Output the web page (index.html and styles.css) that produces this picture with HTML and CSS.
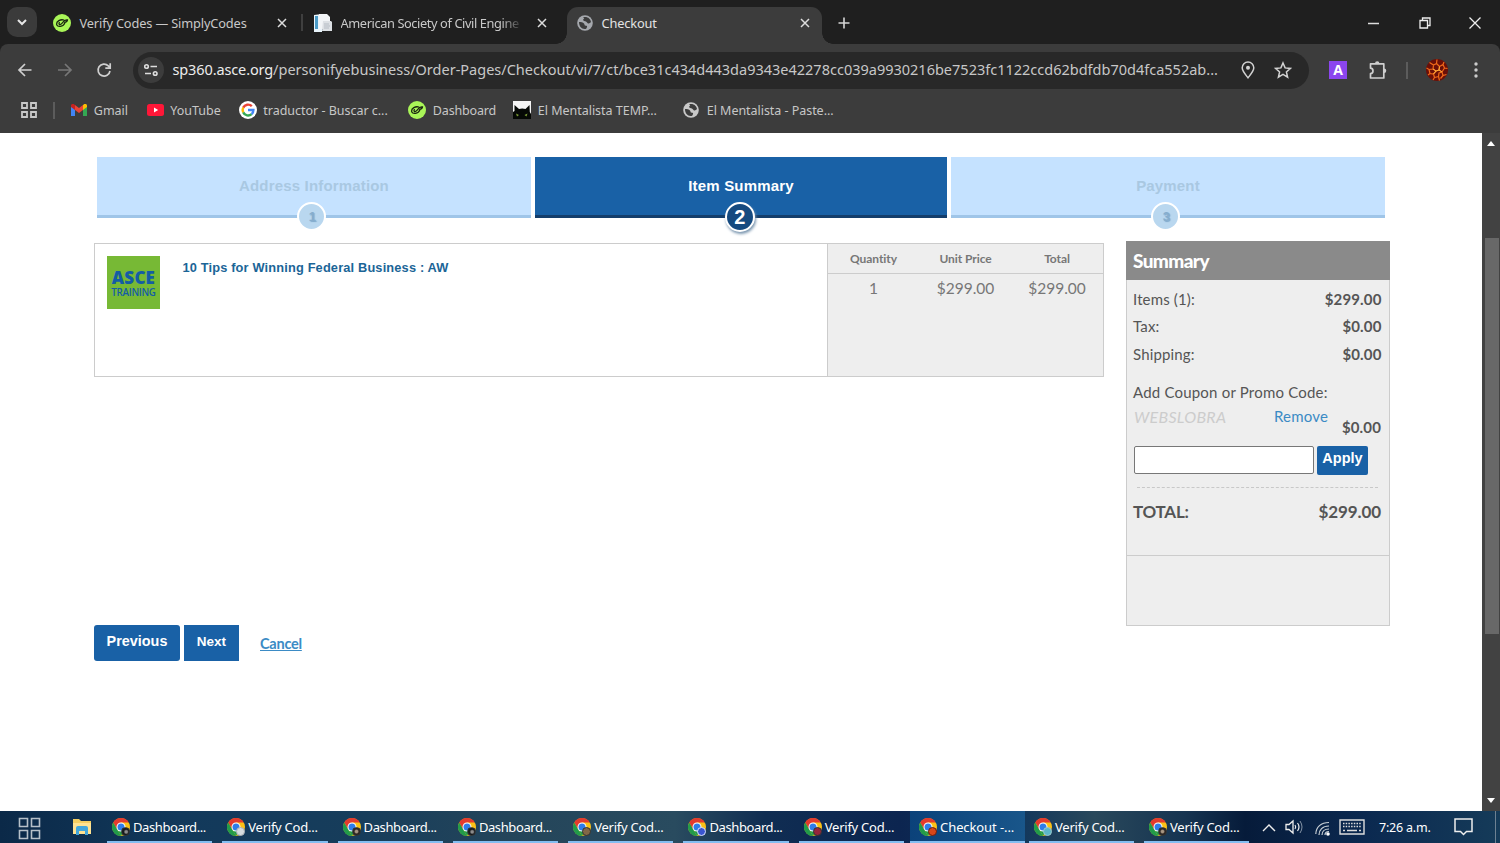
FILE: index.html
```html
<!DOCTYPE html>
<html lang="en">
<head>
<meta charset="utf-8">
<title>Checkout</title>
<link rel="stylesheet" href="styles.css">
</head>
<body>
<svg class="defs" aria-hidden="true">
  <symbol id="x" viewBox="0 0 10 10"><path d="M1 1l8 8M9 1l-8 8" fill="none" stroke="currentColor" stroke-width="1.5"/></symbol>
  <symbol id="globe" viewBox="0 0 16 16"><circle cx="8" cy="8" r="7.8" fill="currentColor"/><path d="M2 7c2 0 4 0 5 1.500 1 1.300.2 2.300 2 2.300s1 1.700.2 3C5 14.800 2 11.500 2 7zM6.200 2.300C10 1 13.500 3.500 14 7c-.8 1-2.200 2-3.300 1.200C9.500 7.300 9.700 6.600 8 6.300 6 6 5.500 4 7.200 3.800z" fill="#3c3c3c"/></symbol>
  <symbol id="simply" viewBox="0 0 18 18"><circle cx="9" cy="9" r="9" fill="#a9f558"/><path d="M10.800 6C7.500 5 3.400 7.300 3.600 10.200c.3 3.300 6.800 2.800 8.300-1.300M6.300 8.600c-.8 1.500.2 2.500 1.500 1.700 1.500-.9 2.600-3 4-3.800 1-.6 1.900-.8 2.700-.6-.2 1.400-1.400 2.300-2.900 2.400" fill="none" stroke="#18220f" stroke-width="1.300" stroke-linecap="round"/></symbol>
  <symbol id="chrome" viewBox="0 0 18 18"><circle cx="9" cy="9" r="9" fill="#fbc116"/><path d="M1.200 4.500A9 9 0 0 1 16.800 4.500H9L5.100 11.200z" fill="#e33b2e"/><path d="M1.200 4.500l3.900 6.800L9 18A9 9 0 0 1 1.200 4.500z" fill="#229b4a"/><path d="M5.100 11.300h7.800L9 18z" fill="#229b4a"/><circle cx="9" cy="9" r="4.500" fill="#fff"/><circle cx="9" cy="9" r="3.500" fill="#2f7de9"/></symbol>
</svg>
<header class="browser">
  <div class="tabs">
    <button class="tab-search"><svg width="10" height="7" viewBox="0 0 10 7"><path d="M1 1l4 4 4-4" fill="none" stroke="#e6e6e6" stroke-width="2"/></svg></button>
    <div class="tab tab-one"><svg class="fav"><use href="#simply"/></svg><span>Verify Codes — SimplyCodes</span><svg class="close"><use href="#x"/></svg></div>
    <div class="tab tab-two"><svg class="fav" viewBox="0 0 18 18"><path d="M0 1l8-1v18H0z" fill="#e9f4fb"/><path d="M1 2h3v13H1z" fill="#4b9bc7"/><path d="M5 0h8l3 3v12H5z" fill="#f2f5f7"/><path d="M9 7h8l1 1v9H8z" fill="#dce0e4"/><path d="M10 10h5M10 12h6M10 14h5" stroke="#b5bcc4"/></svg><span>American Society of Civil Engine</span><svg class="close"><use href="#x"/></svg></div>
    <div class="tab tab-active"><svg class="fav globe"><use href="#globe"/></svg><span>Checkout</span><svg class="close"><use href="#x"/></svg></div>
    <svg class="plus" viewBox="0 0 12 12"><path d="M6 .5v11M.5 6h11" stroke="#d5d5d5" stroke-width="1.600"/></svg>
    <div class="window-controls">
      <svg width="12" height="12"><path d="M0 6.500h11" stroke="#ddd" stroke-width="1.500"/></svg>
      <svg width="12" height="12"><path d="M1 3.500h7.500V11H1zM3.500 3V1H11v7.500H9" fill="none" stroke="#eee" stroke-width="1.300"/></svg>
      <svg width="12" height="12"><path d="M.5.500l11 11M11.500.500l-11 11" stroke="#eee" stroke-width="1.300"/></svg>
    </div>
  </div>
  <div class="toolbar">
    <svg class="nav" viewBox="0 0 16 16"><path d="M14.500 8H2.500M8 2L2 8l6 6" fill="none" stroke="#cfcfcf" stroke-width="1.700"/></svg>
    <svg class="nav" viewBox="0 0 16 16"><path d="M1 8h12.500M8 2l6 6-6 6" fill="none" stroke="#777" stroke-width="1.700"/></svg>
    <svg class="nav" viewBox="0 0 16 16"><path d="M14 9A6 6 0 1 1 12.300 3.800L14 5.500M14.200 1.200v5H9.300" fill="none" stroke="#cfcfcf" stroke-width="1.700"/></svg>
    <div class="address">
      <span class="site-info"><svg width="14" height="14" viewBox="0 0 14 14"><g fill="none" stroke="#dedede" stroke-width="1.600"><circle cx="2.500" cy="3.500" r="1.800"/><path d="M6.500 3.500H13M1 10.500h6"/><circle cx="11.200" cy="10.500" r="1.800"/></g></svg></span>
      <span class="url"><b>sp360.asce.org</b>/personifyebusiness/Order-Pages/Checkout/vi/7/ct/bce31c434d443da9343e42278cc039a9930216be7523fc1122ccd62bdfdb70d4fca552ab...</span>
      <svg class="pin" width="14" height="18" viewBox="0 0 14 18"><path d="M7 16.800C4 13 1.200 10 1.200 6.800a5.800 5.800 0 0 1 11.600 0C12.800 10 10 13 7 16.800z" fill="none" stroke="#d2d2d2" stroke-width="1.500"/><circle cx="7" cy="6.800" r="2" fill="#d2d2d2"/></svg>
      <svg class="star" width="18" height="18" viewBox="0 0 18 18"><path d="M9 2l2.100 4.900 5.300.5-4 3.500 1.200 5.200L9 13.400l-4.600 2.700 1.200-5.200-4-3.500 5.300-.5z" fill="none" stroke="#d2d2d2" stroke-width="1.500"/></svg>
    </div>
    <span class="extension">A</span>
    <svg class="puzzle" width="18" height="19" viewBox="0 0 18 19"><path d="M1.500 2.800h13.300v14.200H1.500v-4.300c3.300-.2 3.300-5.300 0-5.500z" fill="none" stroke="#cfcfcf" stroke-width="1.700" stroke-linejoin="round"/><path d="M6 2.500a2.200 2.200 0 0 1 4.400 0zM15 7.500a2.200 2.200 0 0 1 0 4.600z" fill="#cfcfcf"/></svg>
    <span class="bar-sep"></span>
    <svg class="avatar" width="22" height="22" viewBox="0 0 22 22"><circle cx="11" cy="11" r="11" fill="#6b0f08"/><g fill="none" stroke="#f0691a" stroke-width="1.200"><path d="M3.500 3.500l4 2.500 3-1.500L11 .5M10.500 4.500l3 3 3.500-2 1-2.500M17 5.500l1.500 3.500 3 .5M13.500 7.500L13 11l3 2 2.500-4M16 13l1 3.500 3.500-1M17 16.500l-2.500 3M7.500 6L7 10l3 2 3-1M7 10l-4 .5L.5 9M3 10.500l1 4 3.500.5 2.500-3M4 14.500l-2 1.500M7.500 15l1 3.500L7 21M8.500 18.500l4-1L13 14l3-1M12.500 17.500l1 4"/></g><path d="M7 10l3 2 3-1 .5-3.500M10 12l-2.500 3M13 11l3 2" fill="none" stroke="#ffb640" stroke-width=".9"/></svg>
    <svg class="dots" width="4" height="18"><circle cx="2" cy="3" r="1.700" fill="#ccc"/><circle cx="2" cy="9" r="1.700" fill="#ccc"/><circle cx="2" cy="15" r="1.700" fill="#ccc"/></svg>
  </div>
  <nav class="bookmarks">
    <svg class="apps" width="16" height="16"><path d="M1 1h5v5H1zM10 1h5v5h-5zM1 10h5v5H1zM10 10h5v5h-5z" fill="none" stroke="#c9c9c9" stroke-width="1.800"/></svg>
    <span class="bar-sep"></span>
    <a><svg width="16" height="12" viewBox="0 0 16 12"><path d="M0 1v11h4V4.500z" fill="#4285f4"/><path d="M12 4.500V12h4V1z" fill="#34a853"/><path d="M12 1v5l4-3V1.500C16 0 14-.5 13 .2z" fill="#fbbc04"/><path d="M4 6V1l4 3 4-3v5L8 9z" fill="#ea4335"/><path d="M0 1.500V3l4 3V1L3 .2C2-.5 0 0 0 1.500z" fill="#c5221f"/></svg><span>Gmail</span></a>
    <a><svg width="17" height="12" viewBox="0 0 17 12"><rect width="17" height="12" rx="2.500" fill="#ff1738"/><path d="M7 3.500l4.200 2.500L7 8.500z" fill="#fff"/></svg><span>YouTube</span></a>
    <a><svg width="18" height="18" viewBox="0 0 18 18"><circle cx="9" cy="9" r="9" fill="#fff"/><g fill="none" stroke-width="2.400"><path d="M4.200 6.600A5.400 5.400 0 0 1 12.800 5.200" stroke="#ea4335"/><path d="M4.200 6.600a5.400 5.400 0 0 0 0 4.800" stroke="#fbbc05"/><path d="M4.200 11.400a5.400 5.400 0 0 0 8.400 1.700" stroke="#34a853"/><path d="M9 9h5.400c0 2-.7 3.200-1.800 4.100" stroke="#4285f4"/></g></svg><span>traductor - Buscar c...</span></a>
    <a><svg width="18" height="18"><use href="#simply"/></svg><span class="dash">Dashboard</span></a>
    <a><svg width="18" height="18" viewBox="0 0 18 18"><path fill="#f5f5f5" d="M0 0h18v18H0z"/><path d="M0 18v-7l1.500-1L1.500 4l4.500 4c2-.8 4.500-.8 6.500 0L16.500 4l.3 7 1.200 2v5z" fill="#050805"/><path d="M3 12.500l3 1.500-2 1.500zM14.500 12.500L11.500 14l2 1.500z" fill="#7c9c35"/></svg><span>El Mentalista TEMP...</span></a>
    <a><svg width="16" height="16" class="light"><use href="#globe"/></svg><span class="paste">El Mentalista - Paste...</span></a>
  </nav>
</header>
<div class="viewport">
  <main class="page">
    <section class="steps">
      <div class="step"><span>Address Information</span><i>1</i></div>
      <div class="step current"><span>Item Summary</span><i>2</i></div>
      <div class="step"><span>Payment</span><i>3</i></div>
    </section>
    <div class="columns">
      <div class="left">
        <section class="item">
          <div class="product">
            <div class="logo"><b>ASCE</b><span>TRAINING</span></div>
            <a class="title">10 Tips for Winning Federal Business : AW</a>
          </div>
          <div class="prices">
            <div class="price-row head"><span>Quantity</span><span>Unit Price</span><span>Total</span></div>
            <div class="price-row"><span>1</span><span>$299.00</span><span>$299.00</span></div>
          </div>
        </section>
        <div class="actions"><button class="btn prev">Previous</button><button class="btn next">Next</button><a class="cancel">Cancel</a></div>
      </div>
      <aside class="summary">
        <h2><span>Summary</span></h2>
        <div class="line"><span>Items (1):</span><b>$299.00</b></div>
        <div class="line"><span>Tax:</span><b>$0.00</b></div>
        <div class="line"><span>Shipping:</span><b>$0.00</b></div>
        <div class="coupon-label"><span>Add Coupon or Promo Code:</span></div>
        <div class="coupon"><em>WEBSLOBRA</em><a>Remove</a><b>$0.00</b></div>
        <div class="promo"><input type="text" aria-label="Promo code"><button>Apply</button></div>
        <div class="total"><b>TOTAL:</b><b>$299.00</b></div>
        <div class="foot"></div>
      </aside>
    </div>
  </main>
  <div class="scrollbar"><svg width="8" height="5"><path d="M0 5l4-5 4 5z" fill="#fff"/></svg><span class="thumb"></span><svg width="8" height="5"><path d="M0 0h8L4 5z" fill="#fff"/></svg></div>
</div>
<footer class="taskbar">
  <svg class="start" width="23" height="23"><path d="M1.500 1.500h8v8h-8zM13.500 1.500h8v8h-8zM1.500 13.500h8v8h-8zM13.500 13.500h8v8h-8z" fill="none" stroke="#b6c0c9" stroke-width="1.600"/></svg>
  <svg class="folder" width="18" height="16" viewBox="0 0 18 16"><path d="M0 0h6l2 2h10v13H0z" fill="#f5cf62"/><path d="M0 4h18v11H0z" fill="#ffe392"/><path d="M3 16V9q0-2 2-2h8q2 0 2 2v7h-3v-4H6v4z" fill="#42a7dc"/></svg>
  <div class="tasks">
    <div class="task"><span class="ci"><svg><use href="#chrome"/></svg><i class="c1"></i></span><span class="d">Dashboard...</span></div>
    <div class="task"><span class="ci"><svg><use href="#chrome"/></svg><i class="c2"></i></span><span>Verify Cod...</span></div>
    <div class="task"><span class="ci"><svg><use href="#chrome"/></svg><i class="c3"></i></span><span class="d">Dashboard...</span></div>
    <div class="task"><span class="ci"><svg><use href="#chrome"/></svg><i class="c1"></i></span><span class="d">Dashboard...</span></div>
    <div class="task"><span class="ci"><svg><use href="#chrome"/></svg><i class="c4"></i></span><span>Verify Cod...</span></div>
    <div class="task"><span class="ci"><svg><use href="#chrome"/></svg><i class="c5"></i></span><span class="d">Dashboard...</span></div>
    <div class="task"><span class="ci"><svg><use href="#chrome"/></svg><i class="c6"></i></span><span>Verify Cod...</span></div>
    <div class="task active"><span class="ci"><svg><use href="#chrome"/></svg><i class="c7"></i></span><span class="k">Checkout -...</span></div>
    <div class="task"><span class="ci"><svg><use href="#chrome"/></svg><i class="c8"></i></span><span>Verify Cod...</span></div>
    <div class="task"><span class="ci"><svg><use href="#chrome"/></svg><i class="c3"></i></span><span>Verify Cod...</span></div>
  </div>
  <div class="tray">
    <svg width="14" height="9"><path d="M1 8l6-6 6 6" fill="none" stroke="#eee" stroke-width="1.400"/></svg>
    <svg width="19" height="16"><path d="M1 5.500h3L8 2v12l-4-3.500H1z" fill="none" stroke="#eee" stroke-width="1.300"/><path d="M10 6q1.500 2 0 4M12.500 4q3 4 0 8" fill="none" stroke="#eee" stroke-width="1.200"/><path d="M15 2q4 6 0 12" fill="none" stroke="#8494a5"/></svg>
    <svg width="15" height="15"><g fill="none" stroke="#c8d0d6" stroke-width="1.200"><path d="M.8 13C1 6 6 1.500 14 1.500M4 14c0-5 3.500-9 10-9M7 14c0-3.500 2.500-6 7-6M10 14c0-2 1.500-3.500 4-3.500"/></g><circle cx="13" cy="13" r="1.800" fill="#fff"/></svg>
    <svg width="26" height="16"><path d="M1 1h24v14H1z" fill="none" stroke="#ddd" stroke-width="1.400"/><path d="M4 4.500h18M4 7.500h18" stroke="#ddd" stroke-width="1.500" stroke-dasharray="1.500 1.200"/><path d="M4 11.500h2M8 11.500h10M20 11.500h2" stroke="#ddd" stroke-width="1.400"/></svg>
    <span class="clock">7:26 a.m.</span>
    <svg width="19" height="18"><path d="M1 1h17v12.500h-5.500l-3 3-3-3H1z" fill="none" stroke="#eee" stroke-width="1.500"/></svg>
  </div>
  <span class="peek"></span>
</footer>
</body>
</html>
```
FILE: styles.css
```css
* { box-sizing: border-box; }
html, body { margin: 0; height: 843px; overflow: hidden; }
body { display: flex; flex-direction: column; background: #fff; font-family: "Noto Sans", sans-serif; }
svg { display: block; flex: none; }
.defs { width: 0; height: 0; position: absolute; }
button, input { font: inherit; padding: 0; margin: 0; border: 0; }
span, a, b, em { white-space: nowrap; }

/* Browser chrome */
.browser { height: 133px; flex: none; background: #1f1f1f; }
.tabs { height: 44px; display: flex; align-items: flex-start; padding: 7px 19px 0 7px; }
.tab-search { width: 30px; height: 30px; border-radius: 10px; background: #3b3b3b; display: grid; place-items: center; margin-right: 16px; }
.tab { display: flex; align-items: center; height: 32px; font-size: 12.8px; letter-spacing: -.15px; color: #c8c8c8; }
.tab .fav { width: 18px; height: 18px; margin-right: 8.500px; }
.tab .close { width: 10px; height: 10px; margin-left: auto; color: #ddd; }
.tab-one { width: 250px; padding-right: 16px; position: relative; }
.tab-one::after { content: ""; position: absolute; right: 0; top: 7px; width: 2px; height: 17px; background: #3f3f3f; }
.tab-two { width: 245px; padding: 0 0 0 11px; margin-right: 19px; }
.tab-two .close { margin-right: 1px; }
.tab-two span { letter-spacing: -.4px; -webkit-mask-image: linear-gradient(90deg, #000 90%, rgba(0,0,0,.2)); mask-image: linear-gradient(90deg, #000 90%, rgba(0,0,0,.2)); }
.tab-active { width: 255px; height: 37px; padding: 0 12px 5px 10px; background: #3c3c3c; border-radius: 11px 11px 0 0; color: #e3e3e3; position: relative; }
.tab-active::before, .tab-active::after { content: ""; position: absolute; bottom: 0; width: 11px; height: 11px; }
.tab-active::before { left: -11px; background: radial-gradient(circle at 0 0, transparent 10.5px, #3c3c3c 11px); }
.tab-active::after { right: -11px; background: radial-gradient(circle at 100% 0, transparent 10.5px, #3c3c3c 11px); }
.tab .globe { width: 16px; height: 16px; color: #a5a8ad; }
.plus { width: 12px; height: 12px; margin: 10px 0 0 16px; }
.window-controls { margin: 10px 0 0 auto; display: flex; gap: 38.500px; }
.toolbar { height: 52px; background: #3c3c3c; border-radius: 8px 8px 0 0; display: flex; align-items: center; padding: 0 22px 0 17px; }
.nav { width: 16px; height: 16px; margin-right: 23.500px; }
.address { width: 1176px; height: 37px; margin-left: -2.500px; border-radius: 19px; background: #282828; display: flex; align-items: center; padding-left: 5px; }
.site-info { width: 26px; height: 26px; border-radius: 13px; background: #3c3c3c; display: grid; place-items: center; }
.url { margin: -2px 0 0 8.500px; width: 1068.500px; font-size: 14.500px; color: #c7c7c7; }
.url b { font-weight: 400; color: #ececec; letter-spacing: -.12px; }
.star { margin-left: 19px; }
.extension { width: 18px; height: 18px; margin-left: 20px; background: #8b45ee; color: #fff; font: bold 14px/18px "Open Sans", sans-serif; text-align: center; }
.puzzle { margin-left: 22px; }
.bar-sep { width: 2px; height: 17px; background: #5c5c5c; }
.toolbar .bar-sep { margin: 0 18px 0 19px; }
.dots { margin-left: 26px; }
.bookmarks { height: 37px; background: #3c3c3c; display: grid; grid-template-columns: 32px 18px 75.500px 92px 169.500px 105px 170px 170px; align-items: center; padding: 0 0 9px 21px; font-size: 12.500px; letter-spacing: -.02px; color: #c7c7c7; }
.bookmarks a { display: flex; align-items: center; gap: 6.800px; }
.bookmarks .dash { letter-spacing: -.15px; }
.bookmarks .paste { letter-spacing: -.04px; margin-left: 1px; }
.light { color: #c8c8c8; }

/* Checkout page */
.viewport { flex: 1; min-height: 0; display: flex; }
.page { flex: 1; font-family: Lato, sans-serif; font-size: 15px; color: #555; }
.steps { display: grid; grid-template-columns: 434px 412px 434px; gap: 4px; margin: 24px 0 0 97px; height: 61px; }
.step { background: #c5e2ff; border-bottom: 3px solid #9fc5e8; color: #a9c8e2; font: bold 15px/58px "Liberation Sans", sans-serif; text-align: center; position: relative; letter-spacing: .17px; }
.step i { position: absolute; left: 200px; top: 45px; width: 29px; height: 29px; border: 2px solid #fff; border-radius: 50%; background: #b9d7ef; color: #86adcd; font: bold 13px/26px "Liberation Sans", sans-serif; padding-left: 2px; text-shadow: 1px 1px 1px #7fa9cb; }
.current { background: #1961a6; border-color: #143e6b; color: #fff; }
.current i { left: 190px; width: 30px; height: 30px; background: #154a80; color: #fff; font-size: 20px; line-height: 26px; padding: 0; text-shadow: none; box-shadow: 1px 2px 3px #7894ae; }
.columns { display: flex; align-items: flex-start; padding: 23px 0 0 94px; }
.left { width: 1010px; padding-top: 2px; margin-right: 22px; }
.item { height: 134px; border: 1px solid #ccc; display: flex; }
.product { width: 732px; display: flex; padding: 12px; }
.logo { width: 53px; height: 53px; background: #77b935; color: #145da5; display: flex; flex-direction: column; align-items: center; padding-top: 12px; font-family: "Open Sans", sans-serif; }
.logo b { font-size: 17px; line-height: 19px; font-weight: 800; letter-spacing: .2px; }
.logo span { font-size: 9.800px; line-height: 12px; font-weight: 600; letter-spacing: -.3px; }
.title { margin-left: 22.500px; font: bold 12.800px/23px "Liberation Sans", sans-serif; color: #1b6597; letter-spacing: .16px; }
.prices { flex: 1; background: #eee; border-left: 1px solid #ccc; color: #777; }
.price-row { display: grid; grid-template-columns: 91px 93px 90px; text-align: center; line-height: 28px; font-size: 15.500px; }
.head { font-size: 12px; line-height: 29px; font-weight: 700; border-bottom: 1px solid #ccc; height: 30px; letter-spacing: -.07px; }
.actions { display: flex; margin-top: 248px; }
.btn { height: 36px; background: #1961a6; color: #fff; font: bold 14.400px "Liberation Sans", sans-serif; padding-bottom: 4px; }
.prev { width: 86px; border-radius: 3px; }
.next { width: 55px; margin-left: 4px; font-size: 13.500px; }
.cancel { margin: 9px 0 0 21px; font-weight: 700; font-size: 14.500px; color: #3b8bc5; text-decoration: underline; letter-spacing: -.25px; line-height: 19px; }
.summary { width: 264px; height: 385px; background: #eee; border: 1px solid #ccc; border-top: 0; }
.summary h2 { margin: 0 -1px 6px; height: 39px; line-height: 40px; background: #8a8a8a; color: #fff; padding-left: 7px; font-size: 19px; font-weight: 900; letter-spacing: -.6px; }
.line { display: flex; justify-content: space-between; padding: 0 7.500px 0 6px; height: 27.400px; line-height: 27px; letter-spacing: .15px; }
.coupon-label { padding: 15px 0 0 6px; line-height: 18px; letter-spacing: .2px; }
.coupon { display: flex; padding: 6px 8px 0 7px; line-height: 19px; height: 44.500px; }
.coupon em { color: #ccc; width: 140px; font-size: 16px; letter-spacing: .3px; }
.coupon a { color: #3b8bc5; letter-spacing: .2px; }
.coupon b { margin: 11px 0 0 auto; letter-spacing: .15px; }
.promo { display: flex; padding-left: 7px; gap: 3px; }
.promo input { width: 180px; height: 28px; background: #fff; border: 1px solid #777; border-radius: 2px; }
.promo button { width: 51px; height: 29px; border-radius: 2px; background: #1961a6; color: #fff; font: bold 14.500px "Liberation Sans", sans-serif; padding-bottom: 4px; }
.total { margin: 12px 11px 0 10px; border-top: 1px dashed #c8c8c8; height: 68px; padding-top: 14px; display: flex; justify-content: space-between; font-size: 17px; line-height: 20px; letter-spacing: -.1px; }
.total b:first-child { margin-left: -4px; letter-spacing: -.25px; }
.total b:last-child { margin-right: -3px; }
.foot { border-top: 1px solid #ccc; }
.scrollbar { width: 18px; background: #424242; display: flex; flex-direction: column; align-items: center; padding: 8px 0; }
.thumb { width: 14px; height: 396px; background: #686868; margin: 92px 0 auto 1px; }

/* Desktop taskbar */
.taskbar { height: 32px; flex: none; display: flex; align-items: center; color: #fff; position: relative; background: linear-gradient(90deg, #0b2948 0, #12395b 12%, #173d5b 24%, #24455a 34%, #294b5f 45%, #102d52 51%, #0c2550 60%, #12375c 68%, #29485b 73%, #163451 79%, #061b3a 83%, #0b2950 91%, #153b59 100%); }
.start { margin: 3px 0 0 17.500px; }
.folder { margin: 0 0 0 32px; }
.tasks { display: grid; grid-template-columns: repeat(7, 105.300px) 114px 105px 105px; gap: 10px; margin-left: 16.500px; align-self: stretch; }
.task { display: flex; align-items: center; border-bottom: 2px solid #83bdf0; padding: 2px 0 0 5px; font-size: 13px; letter-spacing: -.25px; }
.task .d { letter-spacing: -.4px; }
.task.active { margin-left: -4px; width: 115px; padding-left: 9px; background: linear-gradient(90deg, #0b427a, #19568a); }
.task .k { letter-spacing: -.1px; }
.task:nth-child(n+9) { margin-left: -9px; width: 105px; }
.ci { position: relative; width: 18px; height: 18px; margin-right: 3px; flex: none; }
.ci svg { width: 18px; height: 18px; }
.ci i { position: absolute; right: 0; bottom: 0; width: 9px; height: 9px; border-radius: 50%; background: #222; border: 1px solid #333; }
.ci .c1 { background: radial-gradient(circle at 60% 55%, #8c8c8c 20%, #16191c 45%); }
.ci .c2 { background: #d5dce0; border-color: #aab0b5; }
.ci .c3 { background: radial-gradient(#a79682 25%, #2b2522 50%); }
.ci .c4 { background: #826847; }
.ci .c5 { background: #3a55d0; border-color: #dae4ff; }
.ci .c6 { background: #95263b; }
.ci .c7 { background: #d8471a; border-color: #6e1d10; }
.ci .c8 { background: #5cb6c8; border-color: #9bc8ce; }
.tray { position: absolute; left: 1262px; top: 0; height: 32px; display: flex; align-items: center; }
.tray svg:nth-child(2) { margin-left: 9px; }
.tray svg:nth-child(3) { margin: 3px 0 0 11px; }
.tray svg:nth-child(4) { margin-left: 9px; }
.clock { width: 75px; margin-left: 14px; font-size: 12.500px; letter-spacing: -.2px; }
.peek { position: absolute; right: 4px; top: 0; width: 1px; height: 32px; background: #6d8192; }
```
